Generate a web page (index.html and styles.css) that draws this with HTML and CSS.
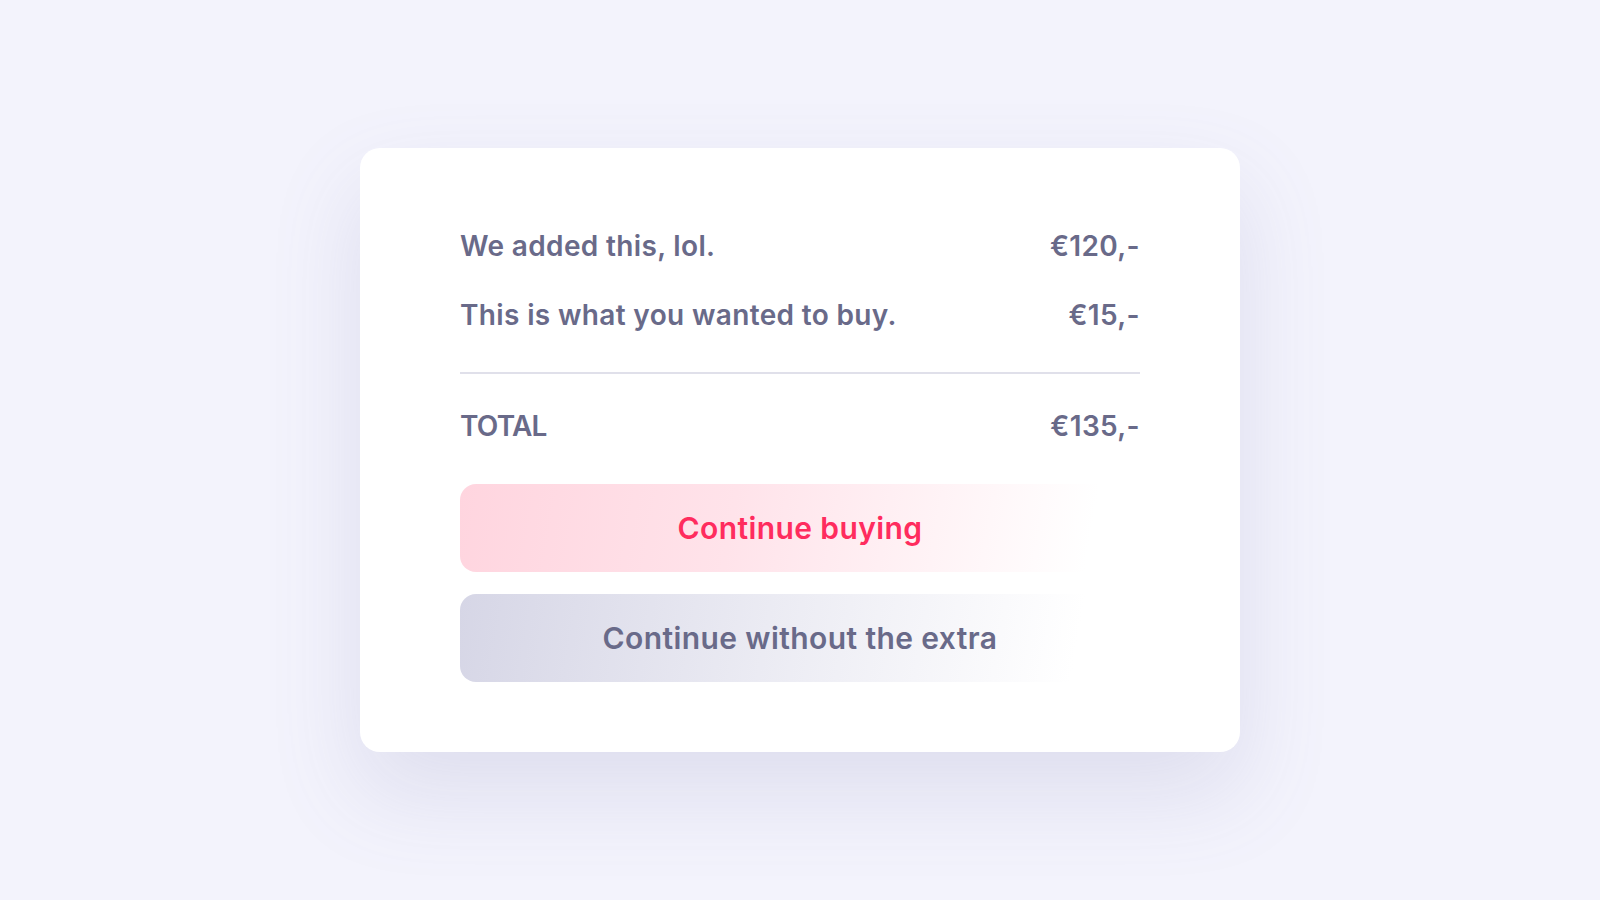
FILE: index.html
```html
<!DOCTYPE html>
<html lang="en">
<head>
<meta charset="utf-8">
<title>Checkout</title>
<link rel="stylesheet" href="styles.css">
</head>
<body>
<main class="stage">
  <section class="card">
    <div class="row"><span>We added this, lol.</span><span>€120,-</span></div>
    <div class="row row-second"><span>This is what you wanted to buy.</span><span>€15,-</span></div>
    <hr class="divider">
    <div class="row row-total"><span class="total-label">TOTAL</span><span>€135,-</span></div>
    <div class="actions">
      <button class="btn btn-primary">Continue buying</button>
      <button class="btn btn-secondary">Continue without the extra</button>
    </div>
  </section>
</main>
</body>
</html>
```
FILE: styles.css
```css
* { box-sizing: border-box; }
html, body { margin: 0; height: 100%; }
body {
  background: #f3f3fc;
  font-family: Inter, "Noto Sans", sans-serif;
  color: #696a89;
}
.stage {
  height: 900px;
  display: flex;
  align-items: center;
  justify-content: center;
}
.card {
  width: 880px;
  height: 604px;
  background: #ffffff;
  border-radius: 20px;
  padding: 78px 100px 70px;
  box-shadow: 0 40px 90px rgba(110, 110, 170, 0.16);
  display: flex;
  flex-direction: column;
}
.row {
  display: flex;
  justify-content: space-between;
  align-items: center;
  height: 40px;
  font-size: 28px;
  font-weight: 600;
  letter-spacing: 0.35px;
}
.total-label { letter-spacing: -0.8px; }
.row-second { margin-top: 29px; }
.divider {
  border: 0;
  height: 2px;
  background: #e0e0ea;
  margin: 37px 0 0;
}
.row-total { margin-top: 32px; }
.actions {
  margin-top: 38px;
  display: flex;
  flex-direction: column;
  gap: 22px;
}
.btn {
  height: 88px;
  border: 0;
  border-radius: 16px;
  font-family: inherit;
  font-size: 30px;
  font-weight: 600;
  letter-spacing: 0.4px;
  cursor: pointer;
}
.btn-primary {
  color: #ff2c5e;
  background: linear-gradient(100deg, #ffd5df 0%, #ffe3ea 40%, #ffffff 92%);
}
.btn-secondary {
  color: #696a89;
  background: linear-gradient(100deg, #d6d6e6 0%, #ebebf3 45%, #ffffff 90%);
}
```
